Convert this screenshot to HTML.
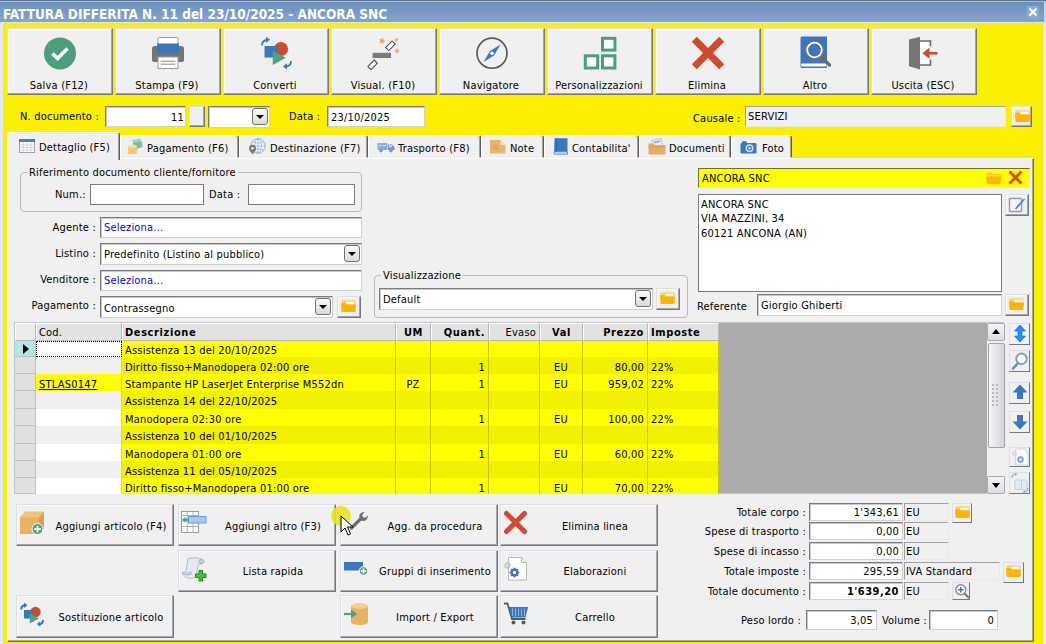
<!DOCTYPE html><html><head><meta charset="utf-8"><title>Fattura differita</title><style>
*{box-sizing:border-box;margin:0;padding:0}
html,body{width:1046px;height:644px;overflow:hidden;background:#faf000}
body{position:relative;font-family:"DejaVu Sans Condensed","Liberation Sans",sans-serif;font-size:11px;color:#000;line-height:13px;letter-spacing:0.2px}
.abs,.abs *{position:absolute}
div,span,svg{position:absolute;white-space:nowrap}
.title{left:0;top:0;width:1046px;height:23px;background:linear-gradient(#6a8ebb,#84a5cd);border-top:1px solid #5f7490;border-bottom:1px solid #dfe4f2;box-shadow:inset 0 1px 0 #a4bedb}
.title span{left:3px;top:5px;color:#fff;font-weight:bold;font-size:13.5px;line-height:16px;letter-spacing:0}
.wb{background:#e4e8f4}
.btn{background:#f0f0f0;border:1px solid;border-color:#dedeea #77777f #77777f #dedeea;box-shadow:inset -1px -1px 0 #a4a4ac,inset 1px 1px 0 #fafafa}
.tb{top:28px;width:106px;height:67px}
.tb span{left:-1px;width:104px;text-align:center;top:50px}
.lbl{line-height:13px}
.r{text-align:right}
.inp{background:#fff;border:1px solid;border-color:#7a7a7a #d0d0d0 #d0d0d0 #7a7a7a;box-shadow:inset 1px 1px 0 #c8c8c8}
.inp span{top:3px;left:3px}
.inp2{background:#fff;border:1px solid #7a7a7a}
.ro{background:#f0f0f0;border:1px solid;border-color:#a0a0a0 #e8e8e8 #e8e8e8 #a0a0a0}
.page{left:7px;top:158px;width:1027px;height:484px;background:#f0f0f0;border:1px solid;border-color:#fff #6c6c7a #6c6c7a #fff;box-shadow:inset -1px -1px 0 #a4a4ac}
.tab{top:135px;height:24px;background:#f0f0f0;border:1px solid;border-color:#fff #5c5c5c transparent #fff;border-radius:3px 3px 0 0;box-shadow:inset -1px 0 0 #a0a0a0}
.tab span{top:6px}
.gb{border:1px solid #b8b8b8;border-radius:4px}
.gb>span{top:-7px;left:6px;background:#f0f0f0;padding:0 2px}
.drop{width:16px;height:17px;border:1px solid #707070;border-radius:3px;background:linear-gradient(#fafafa,#dadada)}
.drop:after{content:"";position:absolute;left:3px;top:5.5px;border:4px solid transparent;border-top:4.5px solid #000;border-bottom:0}
.sb{background:#f0f0f0;border:1px solid;border-color:#fff #808080 #808080 #fff}
</style></head><body>
<div class="title"><span>FATTURA DIFFERITA N. 11 del 23/10/2025 - ANCORA SNC</span></div>
<div style="left:1027px;top:6px;width:12px;height:12px;background:#8aabd4;border-radius:1px"></div>
<div style="left:1044px;top:2px;width:2px;height:21px;background:#c9d6ea"></div>
<svg style="left:1028px;top:7px" width="10" height="10" viewBox="0 0 10 10"><path d="M1.500 1.500L8.500 8.500M8.500 1.500L1.500 8.500" stroke="#fff" stroke-width="2.200"/></svg>
<div class="wb" style="left:0;top:23px;width:3px;height:621px"></div>
<div class="wb" style="left:1043px;top:23px;width:3px;height:621px"></div>
<div class="btn tb" style="left:7px"><svg style="left:36px;top:8px" width="32" height="33" viewBox="0 0 32 33"><circle cx="16" cy="16.4" r="16" fill="#4d9f7c"/><path d="M8.5 16.5l5 5 10-10" stroke="#fff" stroke-width="3.6" fill="none"/></svg><span>Salva (F12)</span></div>
<div class="btn tb" style="left:115px"><svg style="left:36px;top:8px" width="32" height="32" viewBox="0 0 32 32"><rect x="6" y="0.5" width="20" height="12" rx="1" fill="#fff" stroke="#9a9a9a" stroke-width="1"/><rect x="0" y="9" width="32" height="16" rx="2.5" fill="#757575"/><rect x="5" y="6.5" width="22" height="10" fill="#3b77bd"/><rect x="6" y="20" width="20" height="11.5" fill="#fff" stroke="#9a9a9a" stroke-width="1"/><rect x="9" y="23.5" width="14" height="1.5" fill="#b0b0b0"/><rect x="9" y="26.5" width="14" height="1.5" fill="#b0b0b0"/></svg><span>Stampa (F9)</span></div>
<div class="btn tb" style="left:223px"><svg style="left:35px;top:7px" width="34" height="34" viewBox="0 0 34 34"><circle cx="22" cy="13" r="7" fill="#d24a2c"/><rect x="5.5" y="10" width="12.5" height="11.5" fill="#3b77bd"/><path d="M13.7 14.7v14.2l13.2-7.1z" fill="#4aa57c"/><path d="M3 9.5q0-5 5-5.5" stroke="#3b77bd" stroke-width="1.8" fill="none"/><path d="M7 0.8l4 3-4 3z" fill="#3b77bd"/><path d="M32 25q0 5-5 5.5" stroke="#3b77bd" stroke-width="1.8" fill="none"/><path d="M28 27.2l-4 3.2 4 3z" fill="#3b77bd"/></svg><span>Converti</span></div>
<div class="btn tb" style="left:331px"><svg style="left:34px;top:7px" width="36" height="36" viewBox="0 0 36 36"><rect x="6.6" y="16.8" width="18.4" height="5.2" fill="#7a7a7a"/><rect x="-4.5" y="-2.2" width="9" height="4.4" transform="translate(24.4 9.9) rotate(-45)" fill="#fff" stroke="#444" stroke-width="1"/><rect x="-4.5" y="-2.2" width="9" height="4.4" transform="translate(6.6 28.8) rotate(-45)" fill="#fff" stroke="#444" stroke-width="1"/><polygon points="17.1,1.6 17.3,4.0 19.6,4.9 17.3,5.9 17.2,8.4 15.5,6.5 13.1,7.2 14.4,5.0 13.1,2.9 15.5,3.5" fill="#f0a840"/><polygon points="31.2,1.5 31.3,3.0 32.7,3.6 31.3,4.2 31.2,5.7 30.2,4.5 28.7,4.9 29.5,3.6 28.7,2.3 30.2,2.7" fill="#f0a840"/><polygon points="31.9,12.1 32.1,14.2 34.0,15.0 32.1,15.8 32.0,17.8 30.6,16.3 28.6,16.8 29.7,15.0 28.5,13.3 30.6,13.7" fill="#f0a840"/></svg><span>Visual. (F10)</span></div>
<div class="btn tb" style="left:439px"><svg style="left:36px;top:8px" width="32" height="33" viewBox="0 0 32 33"><circle cx="16" cy="16.2" r="15" fill="none" stroke="#5a5a5a" stroke-width="1.7"/><path d="M24.5 7.5L18 18.4 7.5 25 14 14z" fill="#3b77bd"/><circle cx="16" cy="16.2" r="1.8" fill="#fff"/></svg><span>Navigatore</span></div>
<div class="btn tb" style="left:547px"><svg style="left:35px;top:7px" width="35" height="35" viewBox="0 0 35 35"><rect x="19.5" y="2.3" width="12.4" height="11.8" fill="#fff" stroke="#4a9f7b" stroke-width="3"/><rect x="2.3" y="19.8" width="12.4" height="12.2" fill="#fff" stroke="#4a9f7b" stroke-width="3"/><rect x="19.5" y="19.8" width="12.4" height="12.2" fill="#fff" stroke="#4a9f7b" stroke-width="3"/></svg><span>Personalizzazioni</span></div>
<div class="btn tb" style="left:655px"><svg style="left:35px;top:7px" width="34" height="34" viewBox="0 0 34 34"><path d="M3.300 3.300L30.700 30.700M30.700 3.300L3.300 30.700" stroke="#d04a2f" stroke-width="7" fill="none"/></svg><span>Elimina</span></div>
<div class="btn tb" style="left:763px"><svg style="left:36px;top:7px" width="32" height="34" viewBox="0 0 32 34"><path d="M0.5 2q0-1.5 1.5-1.5h25v31.5h-25q-1.5 0-1.5-1.5z" fill="#3b77bd"/><path d="M2 27.5h24.5v3h-24.5q-1-0.2-1-1.5t1-1.5z" fill="#fff"/><path d="M20 19.5L29.5 29" stroke="#6a6a6a" stroke-width="3.2" stroke-linecap="round"/><circle cx="14.5" cy="14" r="9" fill="#fff" stroke="#707070" stroke-width="1.6"/><circle cx="14.5" cy="14" r="6.4" fill="#3b77bd"/></svg><span>Altro</span></div>
<div class="btn tb" style="left:871px"><svg style="left:36px;top:7px" width="32" height="34" viewBox="0 0 32 34"><rect x="11" y="5" width="11.5" height="24" fill="#fff"/><path d="M11 5h11.5v5.5M22.5 23.5v5.500h-11.5" fill="none" stroke="#6a6a6a" stroke-width="1.6"/><path d="M1 3.500L12 0.800V33.400L1 30.200z" fill="#767676"/><path d="M29.500 17.300H17" stroke="#d04a2f" stroke-width="2.6"/><path d="M21.500 11.500L14.500 17.300 21.500 23z" fill="#d04a2f"/></svg><span>Uscita (ESC)</span></div>
<span class="lbl" style="left:20px;top:110px">N. documento :</span>
<div class="inp" style="left:105px;top:106px;width:81px;height:21px"><span style="left:auto;right:1px;top:4px">11</span></div>
<div class="btn" style="left:189px;top:106px;width:16px;height:21px"></div>
<div class="inp" style="left:208px;top:106px;width:62px;height:22px"><div class="drop" style="right:1px;top:1px"></div></div>
<span class="lbl" style="left:289px;top:110px">Data :</span>
<div class="inp" style="left:327px;top:106px;width:98px;height:21px"><span style="top:4px">23/10/2025</span></div>
<span class="lbl" style="left:693px;top:112px">Causale :</span>
<div class="ro" style="left:745px;top:106px;width:261px;height:21px"><span style="left:2px;top:3px">SERVIZI</span></div>
<div class="btn" style="left:1011px;top:106px;width:21px;height:21px"><svg style="left:3px;top:3px" width="15" height="12" viewBox="0 0 15 12"><path d="M0.300 1.800q0-1.500 1.500-1.500h11.400q1.500 0 1.500 1.500v5h-14.400z" fill="#ffcf66"/><rect x="5.300" y="1.700" width="8" height="2.600" fill="#fff"/><path d="M0 4.300q0-1 1-1h3.200q0.800 0 1.200 0.700l0.300 0.500h8.300q1 0 1 1l-0.500 5.500q-0.100 1-1.100 1h-11.800q-1 0-1.100-1z" fill="#ffb400"/></svg></div>
<div class="page"></div>
<div class="tab" style="left:7px;width:113px;top:132px;height:28px;border-bottom:0"><svg style="left:11px;top:6px" width="16" height="14" viewBox="0 0 16 14"><rect x="0.500" y="0.500" width="15" height="13" fill="#fff" stroke="#9aa0a8"/><rect x="0" y="0" width="16" height="3" fill="#4a7fc4"/><path d="M0.500 6h15M0.500 8.500h15M0.500 11h15M4.200 3v10.500M8 3v10.500M11.800 3v10.500" stroke="#c8ccd4" stroke-width="0.800"/></svg><span style="left:31px;top:8px">Dettaglio (F5)</span></div>
<div class="tab" style="left:120px;width:119px;height:23px"><svg style="left:6px;top:2px" width="16" height="17" viewBox="0 0 16 17"><path d="M5 2.500l8-2.300 2.800 5.300-7.500 3.800z" fill="#a9d2c2"/><path d="M6 5l8-1.800 1.800 5.600-7.500 2.800z" fill="#7fbca4"/><path d="M1 8.500v5.500q0 2 4.500 2t4.500-2v-5.500z" fill="#f2bd62"/><ellipse cx="5.500" cy="8.500" rx="4.500" ry="1.800" fill="#f9dca0"/><path d="M1 11.200q4.500 2.200 9 0M1 13.400q4.500 2.200 9 0" stroke="#fbe3b4" stroke-width="0.700" fill="none"/></svg><span style="left:26px;top:6px">Pagamento (F6)</span></div>
<div class="tab" style="left:239px;width:129px;height:23px"><svg style="left:8px;top:2px" width="18" height="17" viewBox="0 0 18 17"><circle cx="10" cy="8" r="7.200" fill="#f6f9fe" stroke="#86aee2" stroke-width="1"/><path d="M2.800 8h14.400M10 0.800v14.400M4 4q6 2.500 12 0M4 12q6-2.500 12 0" stroke="#86aee2" stroke-width="0.700" fill="none"/><ellipse cx="10" cy="8" rx="3.400" ry="7.200" fill="none" stroke="#86aee2" stroke-width="0.700"/><path d="M4.500 16.500q-3.500-4-3.500-6.200a3.500 3.500 0 0 1 7 0q0 2.200-3.500 6.200z" fill="#7a7a7a"/><circle cx="4.500" cy="10.300" r="1.300" fill="#f0f0f0"/></svg><span style="left:30px;top:6px">Destinazione (F7)</span></div>
<div class="tab" style="left:368px;width:113px;height:23px"><svg style="left:8px;top:6px" width="18" height="11" viewBox="0 0 18 11"><rect x="0.500" y="1" width="10" height="7" rx="0.800" fill="#86aee0"/><path d="M11 2.500h4l2.500 3v2.500h-6.500z" fill="#6c9ad6"/><rect x="12" y="3.300" width="2.800" height="2" fill="#dce8f8"/><path d="M2 3.500h2.500M6 3.500h3" stroke="#dce8f8" stroke-width="1.200"/><circle cx="4" cy="8.800" r="1.700" fill="#8890a0"/><circle cx="14" cy="8.800" r="1.700" fill="#8890a0"/></svg><span style="left:29px;top:6px">Trasporto (F8)</span></div>
<div class="tab" style="left:481px;width:63px;height:23px"><svg style="left:8px;top:4px" width="16" height="14" viewBox="0 0 16 14"><path d="M0 0h10.500l5 5v8.500h-15.500z" fill="#e7b574"/><path d="M10.500 0v5h5z" fill="#f6e0b8"/><path d="M2.500 5h6v5h-6z" fill="#dca258" opacity="0.600"/></svg><span style="left:28px;top:6px">Note</span></div>
<div class="tab" style="left:544px;width:95px;height:23px"><svg style="left:8px;top:2px" width="15" height="17" viewBox="0 0 15 17"><path d="M1.500 1.200q0-1 1-1h12v13.500h-12.500q-1 0.200-1 1.300z" fill="#3b77bd"/><path d="M1.800 13.800h12.700v2.400h-12.700q-0.900-0.200-0.900-1.200t0.900-1.200z" fill="#dfe9f6" stroke="#3b77bd" stroke-width="0.800"/><path d="M3.500 0.200v13.500" stroke="#2f62a0" stroke-width="0.800"/></svg><span style="left:27px;top:6px">Contabilita'</span></div>
<div class="tab" style="left:639px;width:92px;height:23px"><svg style="left:8px;top:2px" width="18" height="17" viewBox="0 0 18 17"><path d="M4 2.500l9-2 2 8h-11z" fill="#e8eef6" stroke="#a8b4c8" stroke-width="0.700"/><path d="M6 4.500l6-1.300" stroke="#7ea6d8" stroke-width="1.400"/><path d="M0.500 5.500h5l1.500 1.500h10.500v8.500q0 1-1 1h-15q-1 0-1-1z" fill="#e7ad63"/><path d="M0.500 8.500h17v1h-17z" fill="#d99a48"/></svg><span style="left:29px;top:6px">Documenti</span></div>
<div class="tab" style="left:731px;width:61px;height:23px"><svg style="left:8px;top:5px" width="17" height="13" viewBox="0 0 17 13"><rect x="0.500" y="2" width="16" height="10.500" rx="1.200" fill="#3b77bd"/><rect x="2" y="0.300" width="4.500" height="2.500" fill="#3b77bd"/><circle cx="9.500" cy="7.200" r="4" fill="#cfe0f4"/><circle cx="9.500" cy="7.200" r="2.500" fill="#3b77bd"/><circle cx="9.500" cy="7.200" r="1.200" fill="#e8f0fa"/></svg><span style="left:30px;top:6px">Foto</span></div>
<div class="gb" style="left:20px;top:172px;width:342px;height:40px"><span>Riferimento documento cliente/fornitore</span></div>
<span class="lbl" style="left:55px;top:188px">Num.:</span>
<div class="inp2" style="left:90px;top:184px;width:114px;height:21px"></div>
<span class="lbl" style="left:209px;top:188px">Data :</span>
<div class="inp2" style="left:248px;top:184px;width:107px;height:21px"></div>
<span class="lbl r" style="left:0;width:96px;top:221px">Agente :</span>
<span class="lbl r" style="left:0;width:96px;top:247px">Listino :</span>
<span class="lbl r" style="left:0;width:96px;top:273px">Venditore :</span>
<span class="lbl r" style="left:0;width:96px;top:299px">Pagamento :</span>
<div class="inp" style="left:100px;top:217px;width:262px;height:21px"><span style="color:#0000ff">Seleziona...</span></div>
<div class="inp" style="left:100px;top:243px;width:262px;height:22px"><span style="top:4px">Predefinito (Listino al pubblico)</span><div class="drop" style="right:1px;top:1px"></div></div>
<div class="inp" style="left:100px;top:270px;width:262px;height:21px"><span style="color:#0000ff">Seleziona...</span></div>
<div class="inp" style="left:100px;top:296px;width:233px;height:22px"><span style="top:5px">Contrassegno</span><div class="drop" style="right:1px;top:1px"></div></div>
<div class="btn" style="left:337px;top:296px;width:24px;height:22px"><svg style="left:3px;top:3px" width="15" height="12" viewBox="0 0 15 12"><path d="M0.300 1.800q0-1.500 1.500-1.500h11.400q1.500 0 1.500 1.500v5h-14.400z" fill="#ffcf66"/><rect x="5.300" y="1.700" width="8" height="2.600" fill="#fff"/><path d="M0 4.300q0-1 1-1h3.200q0.800 0 1.200 0.700l0.300 0.500h8.300q1 0 1 1l-0.500 5.500q-0.100 1-1.100 1h-11.800q-1 0-1.100-1z" fill="#ffb400"/></svg></div>
<div class="gb" style="left:374px;top:275px;width:314px;height:43px"><span>Visualizzazione</span></div>
<div class="inp" style="left:379px;top:288px;width:274px;height:22px"><span style="top:4px">Default</span><div class="drop" style="right:1px;top:1px"></div></div>
<div class="btn" style="left:656px;top:288px;width:24px;height:22px"><svg style="left:3px;top:3px" width="15" height="12" viewBox="0 0 15 12"><path d="M0.300 1.800q0-1.500 1.500-1.500h11.400q1.500 0 1.500 1.500v5h-14.400z" fill="#ffcf66"/><rect x="5.300" y="1.700" width="8" height="2.600" fill="#fff"/><path d="M0 4.300q0-1 1-1h3.200q0.800 0 1.200 0.700l0.300 0.500h8.300q1 0 1 1l-0.500 5.500q-0.100 1-1.100 1h-11.800q-1 0-1.100-1z" fill="#ffb400"/></svg></div>
<div style="left:698px;top:168px;width:332px;height:20px;background:#ffff00;border:1px solid;border-color:#6e6e30 #e4e4e8 #e4e4e8 #6e6e30"><span style="left:3px;top:3px">ANCORA SNC</span><svg style="left:287px;top:3px" width="16" height="12" viewBox="0 0 16 12"><path d="M0.500 1.500q0-1 1-1h3.500l1.200 1.200h8q1 0 1 1v1h-14.700z" fill="#ffc640"/><path d="M0 4.500h15.600l-1 6.500q-0.200 1-1.200 1h-11.400q-1 0-1.200-1z" fill="#ffb400"/></svg><svg style="left:308px;top:0px" width="17" height="17" viewBox="0 0 17 17"><path d="M2.500 2.500L14.500 14.500M14.500 2.500L2.500 14.500" stroke="#d85000" stroke-width="3" fill="none"/></svg></div>
<div class="inp2" style="left:698px;top:194px;width:304px;height:98px"><span style="left:2px;top:3px;line-height:14.4px">ANCORA SNC<br>VIA MAZZINI, 34<br>60121 ANCONA (AN)</span></div>
<div class="btn" style="left:1005px;top:194px;width:24px;height:22px"><svg style="left:2px;top:2px" width="19" height="16" viewBox="0 0 19 16"><rect x="1.500" y="1.500" width="12" height="13" rx="1" fill="#f4f4f8" stroke="#9a9a9a" stroke-width="1.400"/><path d="M16.500 2L7.500 12" stroke="#4a86d0" stroke-width="1.800"/></svg></div>
<span class="lbl" style="left:697px;top:300px">Referente</span>
<div class="inp" style="left:757px;top:294px;width:245px;height:22px"><span style="top:4px">Giorgio Ghiberti</span></div>
<div class="btn" style="left:1005px;top:294px;width:24px;height:22px"><svg style="left:3px;top:3px" width="15" height="12" viewBox="0 0 15 12"><path d="M0.300 1.800q0-1.500 1.500-1.500h11.400q1.500 0 1.500 1.500v5h-14.400z" fill="#ffcf66"/><rect x="5.300" y="1.700" width="8" height="2.600" fill="#fff"/><path d="M0 4.300q0-1 1-1h3.200q0.800 0 1.200 0.700l0.300 0.500h8.300q1 0 1 1l-0.500 5.500q-0.100 1-1.100 1h-11.800q-1 0-1.100-1z" fill="#ffb400"/></svg></div>
<div style="left:14px;top:322px;width:990px;height:172px;background:#ababab;border:1px solid #c4c4c8"></div>
<div style="left:15px;top:323px;width:21px;height:18px;background:#ececec;border-right:1px solid #b8b8b8;border-bottom:1px solid #b8b8b8;border-top:1px solid #fff;border-left:1px solid #fff"><span style="left:2px;top:2px"></span></div>
<div style="left:36px;top:323px;width:86px;height:18px;background:#e2e2e2;border-right:1px solid #b8b8b8;border-bottom:1px solid #b8b8b8;border-top:1px solid #fff;border-left:1px solid #fff"><span style="left:2px;top:2px">Cod.</span></div>
<div style="left:122px;top:323px;width:274px;height:18px;background:#e2e2e2;border-right:1px solid #b8b8b8;border-bottom:1px solid #b8b8b8;border-top:1px solid #fff;border-left:1px solid #fff"><span style="font-weight:bold;letter-spacing:0.6px;left:2px;top:2px">Descrizione</span></div>
<div style="left:396px;top:323px;width:35px;height:18px;background:#e2e2e2;border-right:1px solid #b8b8b8;border-bottom:1px solid #b8b8b8;border-top:1px solid #fff;border-left:1px solid #fff"><span style="font-weight:bold;letter-spacing:0.6px;left:0;width:33px;text-align:center;top:2px">UM</span></div>
<div style="left:431px;top:323px;width:58px;height:18px;background:#e2e2e2;border-right:1px solid #b8b8b8;border-bottom:1px solid #b8b8b8;border-top:1px solid #fff;border-left:1px solid #fff"><span style="font-weight:bold;letter-spacing:0.6px;right:3px;top:2px">Quant.</span></div>
<div style="left:489px;top:323px;width:51px;height:18px;background:#e2e2e2;border-right:1px solid #b8b8b8;border-bottom:1px solid #b8b8b8;border-top:1px solid #fff;border-left:1px solid #fff"><span style="right:3px;top:2px">Evaso</span></div>
<div style="left:540px;top:323px;width:43px;height:18px;background:#e2e2e2;border-right:1px solid #b8b8b8;border-bottom:1px solid #b8b8b8;border-top:1px solid #fff;border-left:1px solid #fff"><span style="font-weight:bold;letter-spacing:0.6px;left:0;width:41px;text-align:center;top:2px">Val</span></div>
<div style="left:583px;top:323px;width:65px;height:18px;background:#e2e2e2;border-right:1px solid #b8b8b8;border-bottom:1px solid #b8b8b8;border-top:1px solid #fff;border-left:1px solid #fff"><span style="font-weight:bold;letter-spacing:0.6px;right:3px;top:2px">Prezzo</span></div>
<div style="left:648px;top:323px;width:71px;height:18px;background:#e2e2e2;border-right:1px solid #b8b8b8;border-bottom:1px solid #b8b8b8;border-top:1px solid #fff;border-left:1px solid #fff"><span style="font-weight:bold;letter-spacing:0.6px;left:2px;top:2px">Imposte</span></div>
<div style="left:15px;top:341px;width:21px;height:16px;background:#b4e6e6;border-right:1px solid #c0c0c8;border-bottom:1px solid #c0c0c8"></div>
<div style="left:36px;top:341px;width:86px;height:16px;background:#ffffff;border-right:1px solid #c8c8c8"><span style="left:3px;top:4px;text-decoration:underline"></span></div>
<div style="left:122px;top:341px;width:274px;height:16px;background:#ffff00;border-right:1px solid #c8c800"><span style="left:3px;top:3px">Assistenza 13 del 20/10/2025</span></div>
<div style="left:396px;top:341px;width:35px;height:16px;background:#ffff00;border-right:1px solid #c8c800"><span style="left:0;width:34px;text-align:center;top:3px"></span></div>
<div style="left:431px;top:341px;width:58px;height:16px;background:#ffff00;border-right:1px solid #c8c800"><span style="right:3px;top:3px"></span></div>
<div style="left:489px;top:341px;width:51px;height:16px;background:#ffff00;border-right:1px solid #c8c800"><span style="right:3px;top:3px"></span></div>
<div style="left:540px;top:341px;width:43px;height:16px;background:#ffff00;border-right:1px solid #c8c800"><span style="left:0;width:42px;text-align:center;top:3px"></span></div>
<div style="left:583px;top:341px;width:65px;height:16px;background:#ffff00;border-right:1px solid #c8c800"><span style="right:3px;top:3px"></span></div>
<div style="left:648px;top:341px;width:71px;height:16px;background:#ffff00;border-right:1px solid #c8c800"><span style="left:3px;top:3px"></span></div>
<div style="left:15px;top:357px;width:21px;height:17px;background:#e0e0e0;border-right:1px solid #c0c0c8;border-bottom:1px solid #c0c0c8"></div>
<div style="left:36px;top:357px;width:86px;height:17px;background:#f0f0f0;border-right:1px solid #c8c8c8"><span style="left:3px;top:4px;text-decoration:underline"></span></div>
<div style="left:122px;top:357px;width:274px;height:17px;background:#f0f000;border-right:1px solid #c8c800"><span style="left:3px;top:4px">Diritto fisso+Manodopera 02:00 ore</span></div>
<div style="left:396px;top:357px;width:35px;height:17px;background:#f0f000;border-right:1px solid #c8c800"><span style="left:0;width:34px;text-align:center;top:4px"></span></div>
<div style="left:431px;top:357px;width:58px;height:17px;background:#f0f000;border-right:1px solid #c8c800"><span style="right:3px;top:4px">1</span></div>
<div style="left:489px;top:357px;width:51px;height:17px;background:#f0f000;border-right:1px solid #c8c800"><span style="right:3px;top:4px"></span></div>
<div style="left:540px;top:357px;width:43px;height:17px;background:#f0f000;border-right:1px solid #c8c800"><span style="left:0;width:42px;text-align:center;top:4px">EU</span></div>
<div style="left:583px;top:357px;width:65px;height:17px;background:#f0f000;border-right:1px solid #c8c800"><span style="right:3px;top:4px">80,00</span></div>
<div style="left:648px;top:357px;width:71px;height:17px;background:#f0f000;border-right:1px solid #c8c800"><span style="left:3px;top:4px">22%</span></div>
<div style="left:15px;top:374px;width:21px;height:17px;background:#e0e0e0;border-right:1px solid #c0c0c8;border-bottom:1px solid #c0c0c8"></div>
<div style="left:36px;top:374px;width:86px;height:17px;background:#ffff00;border-right:1px solid #c8c8c8"><span style="left:3px;top:4px;text-decoration:underline">STLAS0147</span></div>
<div style="left:122px;top:374px;width:274px;height:17px;background:#ffff00;border-right:1px solid #c8c800"><span style="left:3px;top:4px">Stampante HP LaserJet Enterprise M552dn</span></div>
<div style="left:396px;top:374px;width:35px;height:17px;background:#ffff00;border-right:1px solid #c8c800"><span style="left:0;width:34px;text-align:center;top:4px">PZ</span></div>
<div style="left:431px;top:374px;width:58px;height:17px;background:#ffff00;border-right:1px solid #c8c800"><span style="right:3px;top:4px">1</span></div>
<div style="left:489px;top:374px;width:51px;height:17px;background:#ffff00;border-right:1px solid #c8c800"><span style="right:3px;top:4px"></span></div>
<div style="left:540px;top:374px;width:43px;height:17px;background:#ffff00;border-right:1px solid #c8c800"><span style="left:0;width:42px;text-align:center;top:4px">EU</span></div>
<div style="left:583px;top:374px;width:65px;height:17px;background:#ffff00;border-right:1px solid #c8c800"><span style="right:3px;top:4px">959,02</span></div>
<div style="left:648px;top:374px;width:71px;height:17px;background:#ffff00;border-right:1px solid #c8c800"><span style="left:3px;top:4px">22%</span></div>
<div style="left:15px;top:391px;width:21px;height:18px;background:#e0e0e0;border-right:1px solid #c0c0c8;border-bottom:1px solid #c0c0c8"></div>
<div style="left:36px;top:391px;width:86px;height:18px;background:#f0f0f0;border-right:1px solid #c8c8c8"><span style="left:3px;top:4px;text-decoration:underline"></span></div>
<div style="left:122px;top:391px;width:274px;height:18px;background:#f0f000;border-right:1px solid #c8c800"><span style="left:3px;top:4px">Assistenza 14 del 22/10/2025</span></div>
<div style="left:396px;top:391px;width:35px;height:18px;background:#f0f000;border-right:1px solid #c8c800"><span style="left:0;width:34px;text-align:center;top:4px"></span></div>
<div style="left:431px;top:391px;width:58px;height:18px;background:#f0f000;border-right:1px solid #c8c800"><span style="right:3px;top:4px"></span></div>
<div style="left:489px;top:391px;width:51px;height:18px;background:#f0f000;border-right:1px solid #c8c800"><span style="right:3px;top:4px"></span></div>
<div style="left:540px;top:391px;width:43px;height:18px;background:#f0f000;border-right:1px solid #c8c800"><span style="left:0;width:42px;text-align:center;top:4px"></span></div>
<div style="left:583px;top:391px;width:65px;height:18px;background:#f0f000;border-right:1px solid #c8c800"><span style="right:3px;top:4px"></span></div>
<div style="left:648px;top:391px;width:71px;height:18px;background:#f0f000;border-right:1px solid #c8c800"><span style="left:3px;top:4px"></span></div>
<div style="left:15px;top:409px;width:21px;height:17px;background:#e0e0e0;border-right:1px solid #c0c0c8;border-bottom:1px solid #c0c0c8"></div>
<div style="left:36px;top:409px;width:86px;height:17px;background:#ffffff;border-right:1px solid #c8c8c8"><span style="left:3px;top:4px;text-decoration:underline"></span></div>
<div style="left:122px;top:409px;width:274px;height:17px;background:#ffff00;border-right:1px solid #c8c800"><span style="left:3px;top:4px">Manodopera 02:30 ore</span></div>
<div style="left:396px;top:409px;width:35px;height:17px;background:#ffff00;border-right:1px solid #c8c800"><span style="left:0;width:34px;text-align:center;top:4px"></span></div>
<div style="left:431px;top:409px;width:58px;height:17px;background:#ffff00;border-right:1px solid #c8c800"><span style="right:3px;top:4px">1</span></div>
<div style="left:489px;top:409px;width:51px;height:17px;background:#ffff00;border-right:1px solid #c8c800"><span style="right:3px;top:4px"></span></div>
<div style="left:540px;top:409px;width:43px;height:17px;background:#ffff00;border-right:1px solid #c8c800"><span style="left:0;width:42px;text-align:center;top:4px">EU</span></div>
<div style="left:583px;top:409px;width:65px;height:17px;background:#ffff00;border-right:1px solid #c8c800"><span style="right:3px;top:4px">100,00</span></div>
<div style="left:648px;top:409px;width:71px;height:17px;background:#ffff00;border-right:1px solid #c8c800"><span style="left:3px;top:4px">22%</span></div>
<div style="left:15px;top:426px;width:21px;height:18px;background:#e0e0e0;border-right:1px solid #c0c0c8;border-bottom:1px solid #c0c0c8"></div>
<div style="left:36px;top:426px;width:86px;height:18px;background:#f0f0f0;border-right:1px solid #c8c8c8"><span style="left:3px;top:4px;text-decoration:underline"></span></div>
<div style="left:122px;top:426px;width:274px;height:18px;background:#f0f000;border-right:1px solid #c8c800"><span style="left:3px;top:4px">Assistenza 10 del 01/10/2025</span></div>
<div style="left:396px;top:426px;width:35px;height:18px;background:#f0f000;border-right:1px solid #c8c800"><span style="left:0;width:34px;text-align:center;top:4px"></span></div>
<div style="left:431px;top:426px;width:58px;height:18px;background:#f0f000;border-right:1px solid #c8c800"><span style="right:3px;top:4px"></span></div>
<div style="left:489px;top:426px;width:51px;height:18px;background:#f0f000;border-right:1px solid #c8c800"><span style="right:3px;top:4px"></span></div>
<div style="left:540px;top:426px;width:43px;height:18px;background:#f0f000;border-right:1px solid #c8c800"><span style="left:0;width:42px;text-align:center;top:4px"></span></div>
<div style="left:583px;top:426px;width:65px;height:18px;background:#f0f000;border-right:1px solid #c8c800"><span style="right:3px;top:4px"></span></div>
<div style="left:648px;top:426px;width:71px;height:18px;background:#f0f000;border-right:1px solid #c8c800"><span style="left:3px;top:4px"></span></div>
<div style="left:15px;top:444px;width:21px;height:17px;background:#e0e0e0;border-right:1px solid #c0c0c8;border-bottom:1px solid #c0c0c8"></div>
<div style="left:36px;top:444px;width:86px;height:17px;background:#ffffff;border-right:1px solid #c8c8c8"><span style="left:3px;top:4px;text-decoration:underline"></span></div>
<div style="left:122px;top:444px;width:274px;height:17px;background:#ffff00;border-right:1px solid #c8c800"><span style="left:3px;top:4px">Manodopera 01:00 ore</span></div>
<div style="left:396px;top:444px;width:35px;height:17px;background:#ffff00;border-right:1px solid #c8c800"><span style="left:0;width:34px;text-align:center;top:4px"></span></div>
<div style="left:431px;top:444px;width:58px;height:17px;background:#ffff00;border-right:1px solid #c8c800"><span style="right:3px;top:4px">1</span></div>
<div style="left:489px;top:444px;width:51px;height:17px;background:#ffff00;border-right:1px solid #c8c800"><span style="right:3px;top:4px"></span></div>
<div style="left:540px;top:444px;width:43px;height:17px;background:#ffff00;border-right:1px solid #c8c800"><span style="left:0;width:42px;text-align:center;top:4px">EU</span></div>
<div style="left:583px;top:444px;width:65px;height:17px;background:#ffff00;border-right:1px solid #c8c800"><span style="right:3px;top:4px">60,00</span></div>
<div style="left:648px;top:444px;width:71px;height:17px;background:#ffff00;border-right:1px solid #c8c800"><span style="left:3px;top:4px">22%</span></div>
<div style="left:15px;top:461px;width:21px;height:17px;background:#e0e0e0;border-right:1px solid #c0c0c8;border-bottom:1px solid #c0c0c8"></div>
<div style="left:36px;top:461px;width:86px;height:17px;background:#f0f0f0;border-right:1px solid #c8c8c8"><span style="left:3px;top:4px;text-decoration:underline"></span></div>
<div style="left:122px;top:461px;width:274px;height:17px;background:#f0f000;border-right:1px solid #c8c800"><span style="left:3px;top:4px">Assistenza 11 del 05/10/2025</span></div>
<div style="left:396px;top:461px;width:35px;height:17px;background:#f0f000;border-right:1px solid #c8c800"><span style="left:0;width:34px;text-align:center;top:4px"></span></div>
<div style="left:431px;top:461px;width:58px;height:17px;background:#f0f000;border-right:1px solid #c8c800"><span style="right:3px;top:4px"></span></div>
<div style="left:489px;top:461px;width:51px;height:17px;background:#f0f000;border-right:1px solid #c8c800"><span style="right:3px;top:4px"></span></div>
<div style="left:540px;top:461px;width:43px;height:17px;background:#f0f000;border-right:1px solid #c8c800"><span style="left:0;width:42px;text-align:center;top:4px"></span></div>
<div style="left:583px;top:461px;width:65px;height:17px;background:#f0f000;border-right:1px solid #c8c800"><span style="right:3px;top:4px"></span></div>
<div style="left:648px;top:461px;width:71px;height:17px;background:#f0f000;border-right:1px solid #c8c800"><span style="left:3px;top:4px"></span></div>
<div style="left:15px;top:478px;width:21px;height:16px;background:#e0e0e0;border-right:1px solid #c0c0c8;border-bottom:1px solid #c0c0c8"></div>
<div style="left:36px;top:478px;width:86px;height:16px;background:#ffffff;border-right:1px solid #c8c8c8"><span style="left:3px;top:4px;text-decoration:underline"></span></div>
<div style="left:122px;top:478px;width:274px;height:16px;background:#ffff00;border-right:1px solid #c8c800"><span style="left:3px;top:4px">Diritto fisso+Manodopera 01:00 ore</span></div>
<div style="left:396px;top:478px;width:35px;height:16px;background:#ffff00;border-right:1px solid #c8c800"><span style="left:0;width:34px;text-align:center;top:4px"></span></div>
<div style="left:431px;top:478px;width:58px;height:16px;background:#ffff00;border-right:1px solid #c8c800"><span style="right:3px;top:4px">1</span></div>
<div style="left:489px;top:478px;width:51px;height:16px;background:#ffff00;border-right:1px solid #c8c800"><span style="right:3px;top:4px"></span></div>
<div style="left:540px;top:478px;width:43px;height:16px;background:#ffff00;border-right:1px solid #c8c800"><span style="left:0;width:42px;text-align:center;top:4px">EU</span></div>
<div style="left:583px;top:478px;width:65px;height:16px;background:#ffff00;border-right:1px solid #c8c800"><span style="right:3px;top:4px">70,00</span></div>
<div style="left:648px;top:478px;width:71px;height:16px;background:#ffff00;border-right:1px solid #c8c800"><span style="left:3px;top:4px">22%</span></div>
<div style="left:36px;top:341px;width:86px;height:16px;border:1px dotted #000"></div>
<div style="left:23px;top:344px;border:5.500px solid transparent;border-left:6px solid #000;border-right:0"></div>
<div style="left:987px;top:323px;width:18px;height:171px;background:#f0f0f0"></div>
<div style="left:987px;top:323px;width:18px;height:18px;border:1px solid #a8a8b0;border-radius:2px;background:linear-gradient(#f6f6f8,#dcdce2)"><div style="left:4px;top:5px;border:4px solid transparent;border-bottom:5px solid #000;border-top:0"></div></div>
<div style="left:987px;top:476px;width:18px;height:18px;border:1px solid #a8a8b0;border-radius:2px;background:linear-gradient(#f6f6f8,#dcdce2)"><div style="left:4px;top:6px;border:4px solid transparent;border-top:5px solid #000;border-bottom:0"></div></div>
<div style="left:988px;top:343px;width:17px;height:105px;border:1px solid #a0a0a8;border-radius:2px;background:linear-gradient(90deg,#f6f6f8,#d4d4dc)"></div>
<div style="left:992px;top:384px;width:2px;height:2px;background:#b8b8c0"></div><div style="left:996px;top:384px;width:2px;height:2px;background:#b8b8c0"></div>
<div style="left:992px;top:388px;width:2px;height:2px;background:#b8b8c0"></div><div style="left:996px;top:388px;width:2px;height:2px;background:#b8b8c0"></div>
<div style="left:992px;top:392px;width:2px;height:2px;background:#b8b8c0"></div><div style="left:996px;top:392px;width:2px;height:2px;background:#b8b8c0"></div>
<div style="left:992px;top:396px;width:2px;height:2px;background:#b8b8c0"></div><div style="left:996px;top:396px;width:2px;height:2px;background:#b8b8c0"></div>
<div style="left:992px;top:400px;width:2px;height:2px;background:#b8b8c0"></div><div style="left:996px;top:400px;width:2px;height:2px;background:#b8b8c0"></div>
<div style="left:992px;top:404px;width:2px;height:2px;background:#b8b8c0"></div><div style="left:996px;top:404px;width:2px;height:2px;background:#b8b8c0"></div>
<div class="btn" style="left:1009px;top:323px;width:21px;height:22px;box-shadow:none"><svg style="left:4px;top:1px" width="12" height="17" viewBox="0 0 12 17"><path d="M6 0l5.500 6h-3.500v5h3.500l-5.500 6-5.500-6h3.500v-5h-3.500z" fill="#1e90ff" stroke="#0a62c8" stroke-width="0.600"/></svg></div>
<div class="btn" style="left:1009px;top:350px;width:21px;height:22px;box-shadow:none"><svg style="left:1px;top:1px" width="18" height="18" viewBox="0 0 18 18"><path d="M2 16.500l5-5.500" stroke="#5c90d2" stroke-width="2.600" stroke-linecap="round"/><circle cx="10.500" cy="6.800" r="5.300" fill="#fff" stroke="#6c9cd8" stroke-width="1.800"/></svg></div>
<div class="btn" style="left:1009px;top:382px;width:21px;height:22px;box-shadow:none"><svg style="left:2px;top:1px" width="16" height="16" viewBox="0 0 16 16"><path d="M8 0.500l7.500 8h-4.500v6.500h-6v-6.500h-4.500z" fill="#3b77bd"/></svg></div>
<div class="btn" style="left:1009px;top:411px;width:21px;height:22px;box-shadow:none"><svg style="left:2px;top:2px" width="16" height="16" viewBox="0 0 16 16"><path d="M8 15.500l7.500-8h-4.500v-6.500h-6v6.500h-4.500z" fill="#3b77bd"/></svg></div>
<div class="btn" style="left:1009px;top:447px;width:21px;height:20px;box-shadow:none"><svg style="left:1px;top:0px;opacity:.7" width="18" height="18" viewBox="0 0 18 18"><path d="M4.500 1h8.500l4 4v12h-12.500z" fill="#fff" stroke="#c0c0c0" stroke-width="0.800"/><circle cx="3.5" cy="5.5" r="1.612" fill="none" stroke="#c8ccd4" stroke-width="1.3"/><path d="M5.32 5.50L6.23 5.50" stroke="#c8ccd4" stroke-width="1.09"/><path d="M4.79 6.79L5.43 7.43" stroke="#c8ccd4" stroke-width="1.09"/><path d="M3.50 7.32L3.50 8.23" stroke="#c8ccd4" stroke-width="1.09"/><path d="M2.21 6.79L1.57 7.43" stroke="#c8ccd4" stroke-width="1.09"/><path d="M1.68 5.50L0.77 5.50" stroke="#c8ccd4" stroke-width="1.09"/><path d="M2.21 4.21L1.57 3.57" stroke="#c8ccd4" stroke-width="1.09"/><path d="M3.50 3.68L3.50 2.77" stroke="#c8ccd4" stroke-width="1.09"/><path d="M4.79 4.21L5.43 3.57" stroke="#c8ccd4" stroke-width="1.09"/><circle cx="9.5" cy="11.5" r="2.108" fill="none" stroke="#4a86d0" stroke-width="1.7"/><path d="M11.88 11.50L13.07 11.50" stroke="#4a86d0" stroke-width="1.43"/><path d="M11.18 13.18L12.02 14.02" stroke="#4a86d0" stroke-width="1.43"/><path d="M9.50 13.88L9.50 15.07" stroke="#4a86d0" stroke-width="1.43"/><path d="M7.82 13.18L6.98 14.02" stroke="#4a86d0" stroke-width="1.43"/><path d="M7.12 11.50L5.93 11.50" stroke="#4a86d0" stroke-width="1.43"/><path d="M7.82 9.82L6.98 8.98" stroke="#4a86d0" stroke-width="1.43"/><path d="M9.50 9.12L9.50 7.93" stroke="#4a86d0" stroke-width="1.43"/><path d="M11.18 9.82L12.02 8.98" stroke="#4a86d0" stroke-width="1.43"/></svg></div>
<div class="btn" style="left:1009px;top:472px;width:21px;height:22px;box-shadow:none"><svg style="left:1px;top:0px;opacity:.7" width="18" height="20" viewBox="0 0 18 20"><path d="M4 7h5l1.500 1.500v8h-6.500z M10.500 7h4l1.500 1.500v8h-5.500z" fill="#dde8f6" stroke="#a8bcd8" stroke-width="0.800"/><path d="M1 5q0-3.500 3.500-4" stroke="#6a9ad8" stroke-width="1.300" fill="none"/><path d="M4 -0.500l2.500 1.800-2.500 1.800z" fill="#6a9ad8"/><path d="M17 15q0 3.500-3.500 4" stroke="#6a9ad8" stroke-width="1.300" fill="none"/><path d="M14 17l-2.500 2 2.500 1.500z" fill="#6a9ad8"/></svg></div>
<div class="btn" style="left:16px;top:504px;width:158px;height:42px"><svg style="left:2px;top:5px" width="26" height="26" viewBox="0 0 26 26"><path d="M1 7.500L6 1.500h19v17l-5 5.500h-19z" fill="#f0c27c"/><path d="M1 7.500h19v16.500h-19z" fill="#e9b262"/><path d="M20 7.500l5-6v17l-5 5.500z" fill="#d9a050"/><circle cx="18.5" cy="19" r="5.5" fill="#4aa57c" stroke="#fff" stroke-width="1"/><path d="M15.2 19h6.6M18.5 15.7v6.6" stroke="#fff" stroke-width="1.800"/></svg><span style="left:30px;width:128px;text-align:center;top:15px">Aggiungi articolo (F4)</span></div>
<div class="btn" style="left:178px;top:504px;width:158px;height:42px"><svg style="left:2px;top:5px" width="26" height="24" viewBox="0 0 26 24"><rect x="0.500" y="1.500" width="17" height="21" fill="#fff" stroke="#9a9a9a"/><path d="M0.500 5.500h17M0.500 11h17M0.500 16.500h17M6.200 1.500v21M12 1.500v21" stroke="#b0b0b0" stroke-width="1"/><rect x="7.500" y="6.500" width="17.500" height="6.500" fill="#a9c8e6" stroke="#6c9cd2"/><path d="M1 9.800l3.500-3v2h3.500v2h-3.500v2z" fill="#4aa57c"/></svg><span style="left:30px;width:128px;text-align:center;top:15px">Aggiungi altro (F3)</span></div>
<div class="btn" style="left:340px;top:504px;width:158px;height:42px"><svg style="left:8px;top:6px" width="20" height="19" viewBox="0 0 20 19"><path d="M2.500 17L12 7.500" stroke="#6e6e6e" stroke-width="3.200" stroke-linecap="round"/><path d="M10.200 5.200q0.500-4 5.300-4.200l-2.300 3 0.800 2.200 2.300 0.600 2.500-2.600q0.500 5-4.300 5.800q-3 0.300-4.300-4.800z" fill="#6e6e6e"/></svg><span style="left:30px;width:128px;text-align:center;top:15px">Agg. da procedura</span></div>
<div class="btn" style="left:500px;top:504px;width:158px;height:42px"><svg style="left:2px;top:5px" width="25" height="25" viewBox="0 0 25 25"><path d="M3.500 3.500L21.500 21.500M21.500 3.500L3.500 21.500" stroke="#d04a2f" stroke-width="5" stroke-linecap="round" fill="none"/></svg><span style="left:30px;width:128px;text-align:center;top:15px">Elimina linea</span></div>
<div class="btn" style="left:178px;top:550px;width:158px;height:42px"><svg style="left:2px;top:5px" width="26" height="26" viewBox="0 0 26 26"><path d="M7 2.500q8-2 14 0.500q3 2 0 5h-3.500l-3 13.500q-4 2-9 0q-4-2-4.500-5l4-1z" fill="#e4e8f0" stroke="#a8b0c0" stroke-width="0.800"/><ellipse cx="20.500" cy="5.500" rx="2.500" ry="2" fill="#c8d0e0" stroke="#98a0b4" stroke-width="0.700"/><path d="M1.500 17q4 3 8 1.500q2-1 0-3" fill="#c8d0e0" stroke="#98a0b4" stroke-width="0.700"/><path d="M14.500 18h3.500v-3.500h3.500v3.500h3.500v3.500h-3.500v3.500h-3.500v-3.500h-3.500z" fill="#3cc43c" stroke="#1a8a1a" stroke-width="1"/></svg><span style="left:30px;width:128px;text-align:center;top:14px">Lista rapida</span></div>
<div class="btn" style="left:340px;top:550px;width:158px;height:42px"><svg style="left:2px;top:10px" width="26" height="16" viewBox="0 0 26 16"><rect x="1" y="1" width="19" height="8.500" fill="#3b77bd"/><circle cx="20.5" cy="10" r="4.3" fill="#4aa57c" stroke="#fff" stroke-width="1"/><path d="M17.92 10h5.159999999999999M20.5 7.42v5.159999999999999" stroke="#fff" stroke-width="1.800"/></svg><span style="left:30px;width:128px;text-align:center;top:14px">Gruppi di inserimento</span></div>
<div class="btn" style="left:500px;top:550px;width:158px;height:42px"><svg style="left:2px;top:5px" width="26" height="26" viewBox="0 0 26 26"><path d="M5.500 1.500h13l5 5v17.500h-18z" fill="#fff" stroke="#b8b8b8" stroke-width="1"/><path d="M18.500 1.500v5h5" fill="#f4f4f4" stroke="#b8b8b8" stroke-width="1"/><circle cx="4.5" cy="9.5" r="2.108" fill="none" stroke="#c4c8d0" stroke-width="1.7"/><path d="M6.88 9.50L8.07 9.50" stroke="#c4c8d0" stroke-width="1.43"/><path d="M6.18 11.18L7.02 12.02" stroke="#c4c8d0" stroke-width="1.43"/><path d="M4.50 11.88L4.50 13.07" stroke="#c4c8d0" stroke-width="1.43"/><path d="M2.82 11.18L1.98 12.02" stroke="#c4c8d0" stroke-width="1.43"/><path d="M2.12 9.50L0.93 9.50" stroke="#c4c8d0" stroke-width="1.43"/><path d="M2.82 7.82L1.98 6.98" stroke="#c4c8d0" stroke-width="1.43"/><path d="M4.50 7.12L4.50 5.93" stroke="#c4c8d0" stroke-width="1.43"/><path d="M6.18 7.82L7.02 6.98" stroke="#c4c8d0" stroke-width="1.43"/><circle cx="11.5" cy="16.5" r="2.852" fill="none" stroke="#3b77bd" stroke-width="2.3"/><path d="M14.72 16.50L16.33 16.50" stroke="#3b77bd" stroke-width="1.93"/><path d="M13.78 18.78L14.92 19.92" stroke="#3b77bd" stroke-width="1.93"/><path d="M11.50 19.72L11.50 21.33" stroke="#3b77bd" stroke-width="1.93"/><path d="M9.22 18.78L8.08 19.92" stroke="#3b77bd" stroke-width="1.93"/><path d="M8.28 16.50L6.67 16.50" stroke="#3b77bd" stroke-width="1.93"/><path d="M9.22 14.22L8.08 13.08" stroke="#3b77bd" stroke-width="1.93"/><path d="M11.50 13.28L11.50 11.67" stroke="#3b77bd" stroke-width="1.93"/><path d="M13.78 14.22L14.92 13.08" stroke="#3b77bd" stroke-width="1.93"/></svg><span style="left:30px;width:128px;text-align:center;top:14px">Elaborazioni</span></div>
<div class="btn" style="left:16px;top:595px;width:158px;height:43px"><svg style="left:3px;top:7px" width="24" height="24" viewBox="0 0 24 24"><circle cx="15.500" cy="9" r="5.200" fill="#d24a2c"/><rect x="4" y="7" width="8.500" height="8.500" fill="#3b77bd"/><path d="M9.800 10.500v10l9.200-5z" fill="#4aa57c"/><path d="M1.200 6.500q0-3.800 3.500-4.200" stroke="#3b77bd" stroke-width="2" fill="none"/><path d="M4 -0.500l3.500 2.800-3.500 2.800z" fill="#3b77bd"/><path d="M23 17q0 3.800-3.500 4.200" stroke="#3b77bd" stroke-width="2" fill="none"/><path d="M20.300 18.200l-3.500 2.900 3.500 2.700z" fill="#3b77bd"/></svg><span style="left:30px;width:128px;text-align:center;top:15px">Sostituzione articolo</span></div>
<div class="btn" style="left:340px;top:595px;width:158px;height:43px"><svg style="left:2px;top:6px" width="26" height="24" viewBox="0 0 26 24"><path d="M8 4v16q0 3 8.500 3t8.500-3v-16z" fill="#e9b262"/><ellipse cx="16.500" cy="4" rx="8.500" ry="3" fill="#f4cf94"/><path d="M1 12h9" stroke="#4aa57c" stroke-width="2.200"/><path d="M8 7.500l6 4.500-6 4.500z" fill="#4aa57c"/></svg><span style="left:30px;width:128px;text-align:center;top:15px">Import / Export</span></div>
<div class="btn" style="left:500px;top:595px;width:158px;height:43px"><svg style="left:2px;top:6px" width="26" height="24" viewBox="0 0 26 24"><path d="M1 1.500h3.500l4.500 15.500h13.500" fill="none" stroke="#5a5a5a" stroke-width="1.800"/><path d="M6 5h19l-2.500 10.500h-13.500z" fill="#3b77bd"/><path d="M9.500 6.500v7.500M12.500 6.500v7.500M15.500 6.500v7.500M18.500 6.500v7.500M21.500 6.500v7.500" stroke="#8fb6e2" stroke-width="1"/><circle cx="10.500" cy="20.500" r="2" fill="#5a5a5a"/><circle cx="20.500" cy="20.500" r="2" fill="#5a5a5a"/></svg><span style="left:30px;width:128px;text-align:center;top:15px">Carrello</span></div>
<span class="lbl r" style="left:680px;width:126px;top:506px">Totale corpo :</span>
<div class="inp" style="left:809px;top:503px;width:94px;height:18px"><span style="left:auto;right:3px;top:2px">1'343,61</span></div>
<div class="ro" style="left:904px;top:503px;width:45px;height:18px"><span style="left:1px;top:2px">EU</span></div>
<span class="lbl r" style="left:680px;width:126px;top:525px">Spese di trasporto :</span>
<div class="inp" style="left:809px;top:522px;width:94px;height:18px"><span style="left:auto;right:3px;top:2px">0,00</span></div>
<div class="ro" style="left:904px;top:522px;width:45px;height:18px"><span style="left:1px;top:2px">EU</span></div>
<span class="lbl r" style="left:680px;width:126px;top:545px">Spese di incasso :</span>
<div class="inp" style="left:809px;top:542px;width:94px;height:18px"><span style="left:auto;right:3px;top:2px">0,00</span></div>
<div class="ro" style="left:904px;top:542px;width:45px;height:18px"><span style="left:1px;top:2px">EU</span></div>
<span class="lbl r" style="left:680px;width:126px;top:565px">Totale imposte :</span>
<div class="inp" style="left:809px;top:562px;width:94px;height:18px"><span style="left:auto;right:3px;top:2px">295,59</span></div>
<div class="ro" style="left:904px;top:562px;width:96px;height:18px"><span style="left:1px;top:2px">IVA Standard</span></div>
<span class="lbl r" style="left:680px;width:126px;top:585px">Totale documento :</span>
<div class="inp" style="left:809px;top:582px;width:94px;height:18px"><span style="font-weight:bold;letter-spacing:0.5px;left:auto;right:3px;top:2px">1'639,20</span></div>
<div class="ro" style="left:904px;top:582px;width:45px;height:18px"><span style="left:1px;top:2px">EU</span></div>
<div class="btn" style="left:952px;top:503px;width:20px;height:20px;box-shadow:none"><svg style="left:2px;top:2px" width="15" height="12" viewBox="0 0 15 12"><path d="M0.300 1.800q0-1.500 1.500-1.500h11.400q1.500 0 1.500 1.500v5h-14.400z" fill="#ffcf66"/><rect x="5.300" y="1.700" width="8" height="2.600" fill="#fff"/><path d="M0 4.300q0-1 1-1h3.200q0.800 0 1.200 0.700l0.300 0.500h8.300q1 0 1 1l-0.500 5.500q-0.100 1-1.100 1h-11.800q-1 0-1.100-1z" fill="#ffb400"/></svg></div>
<div class="btn" style="left:1003px;top:562px;width:21px;height:21px;box-shadow:none"><svg style="left:2px;top:2px" width="15" height="12" viewBox="0 0 15 12"><path d="M0.300 1.800q0-1.500 1.500-1.500h11.400q1.500 0 1.500 1.500v5h-14.400z" fill="#ffcf66"/><rect x="5.300" y="1.700" width="8" height="2.600" fill="#fff"/><path d="M0 4.300q0-1 1-1h3.200q0.800 0 1.200 0.700l0.300 0.500h8.300q1 0 1 1l-0.500 5.500q-0.100 1-1.100 1h-11.800q-1 0-1.100-1z" fill="#ffb400"/></svg></div>
<div class="btn" style="left:952px;top:582px;width:18px;height:18px;box-shadow:none"><svg style="left:1px;top:0px" width="16" height="16" viewBox="0 0 16 16"><path d="M10.500 10.500l4.500 4.500" stroke="#808080" stroke-width="2.400"/><circle cx="6.800" cy="6.800" r="5" fill="#f4f8ff" stroke="#8a8a8a" stroke-width="1.400"/><path d="M4 6.800h5.600M6.800 4v5.600" stroke="#3b77bd" stroke-width="1.400"/></svg></div>
<span class="lbl r" style="left:700px;width:101px;top:614px">Peso lordo :</span>
<div class="inp" style="left:806px;top:610px;width:71px;height:20px"><span style="left:auto;right:3px;top:3px">3,05</span></div>
<span class="lbl" style="left:882px;top:614px">Volume :</span>
<div class="inp" style="left:929px;top:610px;width:69px;height:20px"><span style="left:auto;right:3px;top:3px">0</span></div>
<div style="left:331px;top:506px;width:20px;height:20px;border-radius:10px;background:#ece21c;opacity:.9"></div>
<svg style="left:340px;top:515px" width="14" height="21" viewBox="0 0 14 21"><path d="M1 1v16l4-4 3 7 2.5-1-3-7h5.5z" fill="#fff" stroke="#000" stroke-width="1"/></svg>
</body></html>
